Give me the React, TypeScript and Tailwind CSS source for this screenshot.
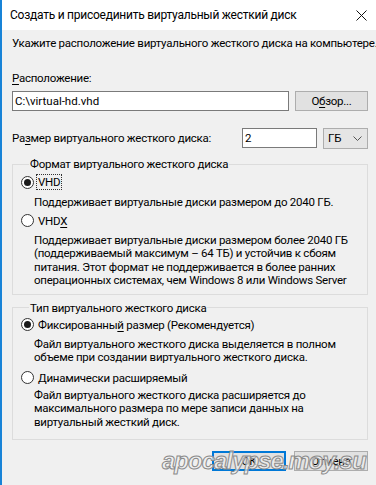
import React from "react";

function Radio({ checked }: { checked?: boolean }) {
  return (
    <span className="w-[13px] h-[13px] rounded-full border border-[#333333] bg-white flex items-center justify-center shrink-0">
      {checked && <span className="w-[7px] h-[7px] rounded-full bg-[#1a1a1a]" />}
    </span>
  );
}

export default function App() {
  return (
    <div
      className="w-[376px] h-[485px] bg-[#f0f0f0] border-l-2 border-[#1883d7] relative overflow-hidden text-[11.5px] tracking-[-0.25px] text-black whitespace-nowrap"
      style={{ fontFamily: 'Roboto, "Liberation Sans", Arial, sans-serif' }}
    >
      {/* Title bar */}
      <div className="h-[30px] bg-white flex items-center pl-[8px] pr-[8px]">
        <span className="leading-[16px] flex-1 text-[12px]">Создать и присоединить виртуальный жесткий диск</span>
        <svg width="11" height="11" viewBox="0 0 11 11" className="mr-[1px]">
          <path d="M0.5 0.5 L10.5 10.5 M10.5 0.5 L0.5 10.5" stroke="#111" strokeWidth="1" fill="none" />
        </svg>
      </div>

      <div className="pl-[10px] pr-[8px] flex flex-col">
        <div className="mt-[5px] leading-[16px]">
          Укажите расположение виртуального жесткого диска на компьютере.
        </div>

        <div className="mt-[19px] leading-[16px]">
          <span className="underline underline-offset-2">Р</span>асположение:
        </div>

        <div className="mt-[5px] flex items-center h-[20px]">
          <div className="w-[277px] h-[20px] bg-white border border-[#7a7a7a] flex items-center px-[2px] leading-[16px] tracking-normal">
            C:\virtual-hd.vhd
          </div>
          <div className="ml-auto w-[73px] h-[20px] bg-[#e1e1e1] border border-[#adadad] flex items-center justify-center leading-[16px]">
            О<span className="underline underline-offset-2">б</span>зор...
          </div>
        </div>

        <div className="mt-[17px] flex items-center h-[20px]">
          <span className="leading-[16px]">
            Ра<span className="underline underline-offset-2">з</span>мер виртуального жесткого диска:
          </span>
          <div className="ml-auto w-[75px] h-[20px] bg-white border border-[#7a7a7a] flex items-center px-[2px] leading-[16px]">
            2
          </div>
          <div className="ml-[6px] w-[45px] h-[21px] bg-[#e5e5e5] border border-[#adadad] flex items-center pl-[4px] pr-[5px] leading-[16px]">
            <span className="flex-1">ГБ</span>
            <svg width="9" height="5" viewBox="0 0 9 5">
              <path d="M0.5 0.5 L4.5 4.5 L8.5 0.5" stroke="#555" strokeWidth="1" fill="none" />
            </svg>
          </div>
        </div>

        {/* Group 1 */}
        <fieldset className="mt-[8px] border border-[#dcdcdc] pl-[8px] pr-[4px] pb-[6px] min-w-0">
          <legend className="ml-[8px] px-[1px] leading-[16px]">Формат виртуального жесткого диска</legend>
          <div className="mt-[2px] flex items-center h-[16px]">
            <Radio checked />
            <span className="ml-[3px] leading-[14px] px-[1px] outline outline-1 outline-dotted outline-[#333]">
              VHD
            </span>
          </div>
          <div className="mt-[6px] ml-[13px] leading-[13.5px]">
            Поддерживает виртуальные диски размером до 2040 ГБ.
          </div>
          <div className="mt-[3px] flex items-center h-[16px]">
            <Radio />
            <span className="ml-[4px] leading-[16px]">
              VHD<span className="underline underline-offset-2">X</span>
            </span>
          </div>
          <div className="mt-[5px] ml-[13px] leading-[13.5px]">
            Поддерживает виртуальные диски размером более 2040 ГБ
            <br />
            (поддерживаемый максимум – 64 ТБ) и устойчив к сбоям
            <br />
            питания. Этот формат не поддерживается в более ранних
            <br />
            операционных системах, чем Windows 8 или Windows Server
          </div>
        </fieldset>

        {/* Group 2 */}
        <fieldset className="mt-[5px] border border-[#dcdcdc] pl-[8px] pr-[4px] pb-[10px] min-w-0">
          <legend className="ml-[8px] px-[1px] leading-[16px]">Тип виртуального жесткого диска</legend>
          <div className="mt-[1px] flex items-center h-[16px]">
            <Radio checked />
            <span className="ml-[4px] leading-[16px]">
              Фиксированны<span className="underline underline-offset-2">й</span> размер (Рекомендуется)
            </span>
          </div>
          <div className="mt-[5px] ml-[13px] leading-[13.5px]">
            Файл виртуального жесткого диска выделяется в полном
            <br />
            объеме при создании виртуального жесткого диска.
          </div>
          <div className="mt-[5px] flex items-center h-[16px]">
            <Radio />
            <span className="ml-[4px] leading-[16px]">
              <span className="underline underline-offset-2">Д</span>инамически расширяемый
            </span>
          </div>
          <div className="mt-[3px] ml-[13px] leading-[13.5px]">
            Файл виртуального жесткого диска расширяется до
            <br />
            максимального размера по мере записи данных на
            <br />
            виртуальный жесткий диск.
          </div>
        </fieldset>

        <div className="mt-[11px] flex justify-end gap-[8px]">
          <div className="w-[74px] h-[20px] bg-[#e1e1e1] border-2 border-[#0078d7] flex items-center justify-center leading-[16px]">
            ОК
          </div>
          <div className="w-[74px] h-[20px] bg-[#e1e1e1] border border-[#adadad] flex items-center justify-center leading-[16px]">
            Отмена
          </div>
        </div>
      </div>

      {/* Watermark overlay */}
      <div
        className="absolute left-[160px] top-[446px] text-[24px] italic font-bold leading-[30px] tracking-[-1px] text-[rgba(240,240,240,0.7)] [-webkit-text-stroke:1px_#8a8a8a] pointer-events-none"
        style={{ fontFamily: '"Liberation Sans", Arial, sans-serif' }}
      >
        apocalypse.moy.su
      </div>
    </div>
  );
}
